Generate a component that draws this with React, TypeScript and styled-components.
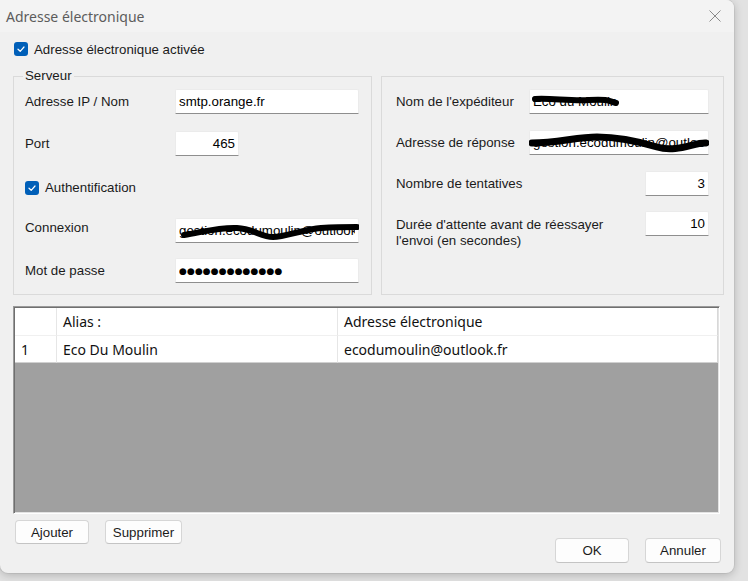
import React from 'react';
import styled, { createGlobalStyle } from 'styled-components';

const sans = `"Liberation Sans", Arial, sans-serif`;
const ui = `"Noto Sans", "Open Sans", sans-serif`;

const GlobalStyle = createGlobalStyle`
  html, body { margin: 0; padding: 0; }
  body { background: #e2e2e2; width: 748px; height: 581px; overflow: hidden; }
`;

const Window = styled.div`
  width: 734px;
  height: 573px;
  box-sizing: border-box;
  background: #f0f0f0;
  border-radius: 0 8px 8px 8px;
  box-shadow: 0 2px 10px rgba(0, 0, 0, 0.22), 0 0 0 1px rgba(0, 0, 0, 0.05);
  display: flex;
  flex-direction: column;
  font-family: ${sans};
  font-size: 13.3px;
  color: #1b1b1b;
  overflow: hidden;
`;

const TitleBar = styled.div`
  height: 32px;
  flex: none;
  display: flex;
  align-items: center;
  justify-content: space-between;
  padding: 0 12px 0 6px;
  background: #f3f3f3;
  font-family: ${ui};
  font-size: 14px;
  color: #5c5c5c;
`;

const Body = styled.div`
  padding: 10px 0 0 13px;
  display: flex;
  flex-direction: column;
`;

const CheckRow = styled.label`
  display: flex;
  align-items: center;
  gap: 6px;
  height: 14px;
  margin-left: ${(p: { $ml?: number }) => p.$ml ?? 0}px;
`;

const Box = styled.span`
  width: 14px;
  height: 14px;
  border-radius: 3px;
  background: #005fb8;
  display: inline-flex;
  align-items: center;
  justify-content: center;
  flex: none;
`;

const Groups = styled.div`
  display: flex;
  gap: 9px;
  margin-top: 12px;
  height: 227px;
  align-items: flex-start;
`;

const Group = styled.fieldset<{ $w: number; $h: number; $mt?: number; $pt: number; $pl: number }>`
  margin: ${(p) => p.$mt ?? 0}px 0 0 0;
  width: ${(p) => p.$w}px;
  height: ${(p) => p.$h}px;
  box-sizing: border-box;
  border: 1px solid #dadada;
  padding: ${(p) => p.$pt}px 0 0 ${(p) => p.$pl}px;
  min-width: 0;
  display: flex;
  flex-direction: column;
`;

const Legend = styled.legend`
  padding: 0 2px;
  margin-left: -2px;
  line-height: 16px;
`;

const Row = styled.div<{ $mt?: number; $top?: boolean }>`
  display: flex;
  align-items: ${(p) => (p.$top ? 'flex-start' : 'center')};
  height: 25px;
  margin-top: ${(p) => p.$mt ?? 0}px;
`;

const Label = styled.span<{ $w: number; $pt?: number }>`
  width: ${(p) => p.$w}px;
  flex: none;
  padding-top: ${(p) => p.$pt ?? 0}px;
  line-height: 16px;
`;

const FieldWrap = styled.div`
  position: relative;
  display: flex;
`;

const Input = styled.input<{ $w: number; $right?: boolean }>`
  width: ${(p) => p.$w}px;
  height: 25px;
  box-sizing: border-box;
  border: 1px solid #ebebeb;
  border-bottom-color: #8e8e8e;
  border-radius: 2px 2px 0 0;
  background: #fff;
  padding: 0 3px;
  font-family: ${sans};
  font-size: 13.3px;
  color: #000;
  text-align: ${(p) => (p.$right ? 'right' : 'left')};
  outline: none;
`;

const Dots = styled(Input)`
  font-family: "DejaVu Sans", sans-serif;
  font-size: 9px;
  letter-spacing: 0.1px;
`;

const Scribble = styled.svg`
  position: absolute;
  left: 0;
  top: 0;
  pointer-events: none;
`;

const Grid = styled.div`
  margin-top: 11px;
  width: 707px;
  height: 208px;
  box-sizing: border-box;
  background: #a0a0a0;
  border: 1px solid;
  border-color: #9a9a9a #ffffff #ffffff #9a9a9a;
  padding: 1px;
  box-shadow: inset 1px 1px 0 #6f6f6f, inset -1px -1px 0 #e3e3e3;
`;

const Table = styled.div`
  display: grid;
  grid-template-columns: 42px 281px 380px;
  grid-template-rows: 28px 27px;
  font-family: ${ui};
  font-size: 14px;
  color: #111;
`;

const Cell = styled.div<{ $head?: boolean; $last?: boolean }>`
  background: #fff;
  display: flex;
  align-items: center;
  padding-left: 6px;
  border-right: 1px solid ${(p) => (p.$last ? '#d8d8d8' : '#e6e6e6')};
  border-bottom: 1px solid ${(p) => (p.$head ? '#f0f0f0' : '#d0d0d0')};
  white-space: nowrap;
  overflow: hidden;
`;

const Footer = styled.div`
  display: flex;
  justify-content: space-between;
  align-items: flex-start;
  width: 708px;
  margin-top: 6px;
`;

const ButtonGroup = styled.div<{ $mt?: number; $ml?: number }>`
  display: flex;
  gap: 16px;
  margin-top: ${(p) => p.$mt ?? 0}px;
  margin-left: ${(p) => p.$ml ?? 0}px;
`;

const Button = styled.button<{ $w: number; $h?: number }>`
  width: ${(p) => p.$w}px;
  height: ${(p) => p.$h ?? 24}px;
  background: #fdfdfd;
  border: 1px solid #d6d6d6;
  border-bottom-color: #c4c4c4;
  border-radius: 4px;
  font-family: ${sans};
  font-size: 13.3px;
  color: #1b1b1b;
  padding: 0;
`;

const Check = () => (
  <Box>
    <svg width="10" height="10" viewBox="0 0 10 10">
      <path d="M2 5.2 L4.2 7.3 L8 3" fill="none" stroke="#fff" strokeWidth="1.2" strokeLinecap="round" strokeLinejoin="round" />
    </svg>
  </Box>
);

const Mark = ({ w, d, sw }: { w: number; d: string; sw: number }) => (
  <Scribble width={w} height={25} viewBox={`0 0 ${w} 25`}>
    <path d={d} fill="none" stroke="#000" strokeWidth={sw} strokeLinecap="round" strokeLinejoin="round" />
  </Scribble>
);

const App: React.FC = () => {
  return (
    <>
      <GlobalStyle />
      <Window>
        <TitleBar>
          <span>Adresse électronique</span>
          <svg width="14" height="14" viewBox="0 0 14 14">
            <path d="M1.5 1.5 L12.5 12.5 M12.5 1.5 L1.5 12.5" stroke="#8a8a8a" strokeWidth="1" />
          </svg>
        </TitleBar>
        <Body>
          <CheckRow $ml={1}>
            <Check />
            Adresse électronique activée
          </CheckRow>

          <Groups>
            <Group $w={359} $h={227} $pt={5} $pl={11}>
              <Legend>Serveur</Legend>
              <Row>
                <Label $w={150}>Adresse IP / Nom</Label>
                <Input $w={184} readOnly defaultValue="smtp.orange.fr" />
              </Row>
              <Row $mt={17}>
                <Label $w={150}>Port</Label>
                <Input $w={64} $right readOnly defaultValue="465" />
              </Row>
              <Row $mt={19}>
                <CheckRow>
                  <Check />
                  Authentification
                </CheckRow>
              </Row>
              <Row $mt={18} $top>
                <Label $w={150} $pt={2}>Connexion</Label>
                <FieldWrap>
                  <Input $w={184} readOnly defaultValue="gestion.ecodumoulin@outlook.fr" />
                  <Mark w={184} sw={6} d="M9 17 C 28 14, 45 9, 62 10 S 86 19, 98 19 S 130 11, 146 10 S 172 9, 182 9" />
                </FieldWrap>
              </Row>
              <Row $mt={15}>
                <Label $w={150}>Mot de passe</Label>
                <Dots $w={184} readOnly defaultValue="●●●●●●●●●●●●●" />
              </Row>
            </Group>

            <Group $w={343} $h={219} $mt={8} $pt={12} $pl={14}>
              <Row>
                <Label $w={133}>Nom de l'expéditeur</Label>
                <FieldWrap>
                  <Input $w={180} readOnly defaultValue="Eco du Moulin" />
                  <Mark w={180} sw={6} d="M6 10 C 22 9, 40 12, 60 11 S 80 12, 87 14" />
                </FieldWrap>
              </Row>
              <Row $mt={16}>
                <Label $w={133}>Adresse de réponse</Label>
                <FieldWrap>
                  <Input $w={180} readOnly defaultValue="gestion.ecodumoulin@outlook.fr" />
                  <Mark w={180} sw={7} d="M3 13 C 28 13, 48 7, 68 7 S 108 11, 128 17 S 166 12, 177 13" />
                </FieldWrap>
              </Row>
              <Row $mt={16}>
                <Label $w={249}>Nombre de tentatives</Label>
                <Input $w={64} $right readOnly defaultValue="3" />
              </Row>
              <Row $mt={15} $top>
                <Label $w={249} $pt={6}>
                  Durée d'attente avant de réessayer
                  <br />
                  l'envoi (en secondes)
                </Label>
                <Input $w={64} $right readOnly defaultValue="10" />
              </Row>
            </Group>
          </Groups>

          <Grid>
            <Table>
              <Cell $head />
              <Cell $head>Alias :</Cell>
              <Cell $head $last>Adresse électronique</Cell>
              <Cell>1</Cell>
              <Cell>Eco Du Moulin</Cell>
              <Cell $last>ecodumoulin@outlook.fr</Cell>
            </Table>
          </Grid>

          <Footer>
            <ButtonGroup $ml={2}>
              <Button $w={74}>Ajouter</Button>
              <Button $w={77}>Supprimer</Button>
            </ButtonGroup>
            <ButtonGroup $mt={18}>
              <Button $w={74} $h={25}>OK</Button>
              <Button $w={76} $h={25}>Annuler</Button>
            </ButtonGroup>
          </Footer>
        </Body>
      </Window>
    </>
  );
};

export default App;
